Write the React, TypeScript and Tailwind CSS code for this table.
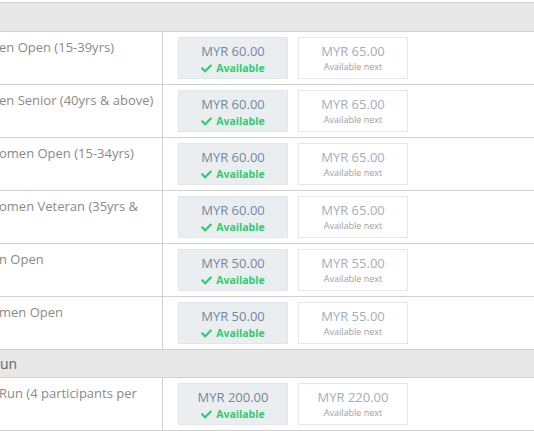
import { Fragment } from "react";

interface Fee {
  label: string;
  now: string;
  next: string;
}

const solo: Fee[] = [
  { label: "en Open (15-39yrs)", now: "MYR 60.00", next: "MYR 65.00" },
  { label: "en Senior (40yrs & above)", now: "MYR 60.00", next: "MYR 65.00" },
  { label: "omen Open (15-34yrs)", now: "MYR 60.00", next: "MYR 65.00" },
  { label: "omen Veteran (35yrs &", now: "MYR 60.00", next: "MYR 65.00" },
  { label: "n Open", now: "MYR 50.00", next: "MYR 55.00" },
  { label: "men Open", now: "MYR 50.00", next: "MYR 55.00" },
];

const team: Fee[] = [{ label: "Run (4 participants per", now: "MYR 200.00", next: "MYR 220.00" }];

const CheckIcon = () => (
  <svg viewBox="0 0 512 512" className="w-[11px] h-[11px] fill-[#2ecc71]">
    <path d="M173.9 439.4l-166.4-166.4c-10-10-10-26.2 0-36.2l36.2-36.2c10-10 26.2-10 36.2 0L192 312.7 432.1 72.6c10-10 26.2-10 36.2 0l36.2 36.2c10 10 10 26.2 0 36.2L210.1 439.4c-10 10-26.2 10-36.2 0z" />
  </svg>
);

const FeeRow = ({ fee }: { fee: Fee }) => (
  <div className="flex h-[53px] border-b border-[#d0d0d0]">
    <div className="w-[163px] shrink-0 border-r border-[#d0d0d0] pt-[5px] text-[13px] leading-[20px] text-[#8a8a8a] whitespace-nowrap overflow-hidden">
      <span className="-ml-[1px]">{fee.label}</span>
    </div>
    <div className="flex gap-[10px] pl-[15px] pt-[5px]">
      <div className="w-[110px] h-[42px] border border-[#e2e6e8] bg-[#ebeef0] flex flex-col items-center pt-[5px]">
        <span className="text-[13px] leading-[16px] text-[#7089a0]">{fee.now}</span>
        <span className="mt-[2px] flex items-center gap-[4px] text-[10.5px] leading-[14px] font-bold text-[#2ecc71]">
          <CheckIcon />
          Available
        </span>
      </div>
      <div className="w-[110px] h-[42px] border border-[#e6e6e6] bg-white flex flex-col items-center pt-[5px]">
        <span className="text-[13px] leading-[16px] text-[#a4adbd]">{fee.next}</span>
        <span className="mt-[2px] text-[9px] leading-[12px] text-[#a0a0a0]">Available next</span>
      </div>
    </div>
  </div>
);

const App = () => {
  return (
    <div className="w-[534px] h-[431px] overflow-hidden bg-white font-['Open_Sans',sans-serif] pt-[2px]">
      <div className="h-[30px] border-y border-[#d0d0d0] bg-[#e8e8e8]" />
      {solo.map((fee, i) => (
        <Fragment key={i}>
          <FeeRow fee={fee} />
        </Fragment>
      ))}
      <div className="-mt-px h-[29px] border-y border-[#d0d0d0] bg-[#e8e8e8] pt-[4px] text-[14px] leading-[20px] text-[#666] whitespace-nowrap overflow-hidden">
        un
      </div>
      {team.map((fee, i) => (
        <FeeRow key={i} fee={fee} />
      ))}
    </div>
  );
};

export default App;
